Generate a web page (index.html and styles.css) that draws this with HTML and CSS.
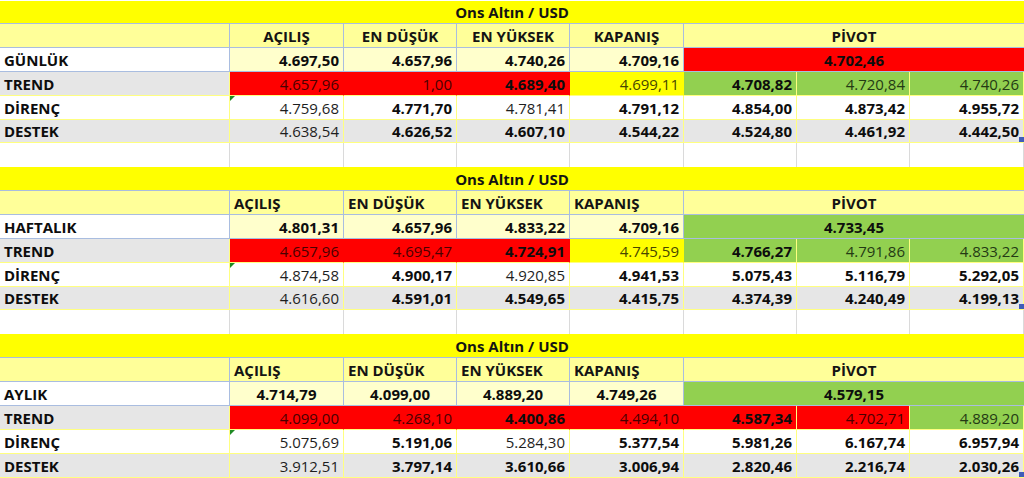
FILE: index.html
```html
<!DOCTYPE html>
<html lang="tr">
<head>
<meta charset="utf-8">
<title>Ons Altın / USD</title>
<link rel="stylesheet" href="styles.css">
</head>
<body>
<main class="sheet">

  <section class="block block--first">
    <div class="c title">Ons Altın / USD</div>

    <div class="c hd"></div>
    <div class="c hd hd--center">AÇILIŞ</div>
    <div class="c hd hd--center">EN DÜŞÜK</div>
    <div class="c hd hd--center">EN YÜKSEK</div>
    <div class="c hd hd--center">KAPANIŞ</div>
    <div class="c hd hd--center hd--pivot">PİVOT</div>

    <div class="c lbl lbl--main">GÜNLÜK</div>
    <div class="c main b">4.697,50</div>
    <div class="c main b">4.657,96</div>
    <div class="c main b">4.740,26</div>
    <div class="c main b">4.709,16</div>
    <div class="c main pivot pivot--red b">4.702,46</div>

    <div class="c lbl gray">TREND</div>
    <div class="c v tr red n">4.657,96</div>
    <div class="c v tr red n">1,00</div>
    <div class="c v tr red b">4.689,40</div>
    <div class="c v tr yel n">4.699,11</div>
    <div class="c v grn b">4.708,82</div>
    <div class="c v grn n">4.720,84</div>
    <div class="c v grn n">4.740,26</div>

    <div class="c lbl">DİRENÇ</div>
    <div class="c v n flag">4.759,68</div>
    <div class="c v b">4.771,70</div>
    <div class="c v n">4.781,41</div>
    <div class="c v b">4.791,12</div>
    <div class="c v b">4.854,00</div>
    <div class="c v b">4.873,42</div>
    <div class="c v b">4.955,72</div>

    <div class="c lbl gray">DESTEK</div>
    <div class="c v gray n">4.638,54</div>
    <div class="c v gray b">4.626,52</div>
    <div class="c v gray b">4.607,10</div>
    <div class="c v gray b">4.544,22</div>
    <div class="c v gray b">4.524,80</div>
    <div class="c v gray b">4.461,92</div>
    <div class="c v gray b handle">4.442,50</div>

    <div class="c empty"></div><div class="c empty"></div><div class="c empty"></div><div class="c empty"></div>
    <div class="c empty"></div><div class="c empty"></div><div class="c empty"></div><div class="c empty"></div>
  </section>

  <section class="block">
    <div class="c title">Ons Altın / USD</div>

    <div class="c hd"></div>
    <div class="c hd">AÇILIŞ</div>
    <div class="c hd">EN DÜŞÜK</div>
    <div class="c hd">EN YÜKSEK</div>
    <div class="c hd">KAPANIŞ</div>
    <div class="c hd hd--center hd--pivot">PİVOT</div>

    <div class="c lbl lbl--main">HAFTALIK</div>
    <div class="c main b">4.801,31</div>
    <div class="c main b">4.657,96</div>
    <div class="c main b">4.833,22</div>
    <div class="c main b">4.709,16</div>
    <div class="c main pivot pivot--green b">4.733,45</div>

    <div class="c lbl gray">TREND</div>
    <div class="c v tr red n">4.657,96</div>
    <div class="c v tr red n">4.695,47</div>
    <div class="c v tr red b">4.724,91</div>
    <div class="c v tr yel n">4.745,59</div>
    <div class="c v grn b">4.766,27</div>
    <div class="c v grn n">4.791,86</div>
    <div class="c v grn n">4.833,22</div>

    <div class="c lbl">DİRENÇ</div>
    <div class="c v n flag">4.874,58</div>
    <div class="c v b">4.900,17</div>
    <div class="c v n">4.920,85</div>
    <div class="c v b">4.941,53</div>
    <div class="c v b">5.075,43</div>
    <div class="c v b">5.116,79</div>
    <div class="c v b">5.292,05</div>

    <div class="c lbl gray">DESTEK</div>
    <div class="c v gray n">4.616,60</div>
    <div class="c v gray b">4.591,01</div>
    <div class="c v gray b">4.549,65</div>
    <div class="c v gray b">4.415,75</div>
    <div class="c v gray b">4.374,39</div>
    <div class="c v gray b">4.240,49</div>
    <div class="c v gray b handle">4.199,13</div>

    <div class="c empty"></div><div class="c empty"></div><div class="c empty"></div><div class="c empty"></div>
    <div class="c empty"></div><div class="c empty"></div><div class="c empty"></div><div class="c empty"></div>
  </section>

  <section class="block block--last">
    <div class="c title">Ons Altın / USD</div>

    <div class="c hd"></div>
    <div class="c hd">AÇILIŞ</div>
    <div class="c hd">EN DÜŞÜK</div>
    <div class="c hd">EN YÜKSEK</div>
    <div class="c hd">KAPANIŞ</div>
    <div class="c hd hd--center hd--pivot">PİVOT</div>

    <div class="c lbl lbl--main">AYLIK</div>
    <div class="c main main--center b">4.714,79</div>
    <div class="c main main--center b">4.099,00</div>
    <div class="c main main--center b">4.889,20</div>
    <div class="c main main--center b">4.749,26</div>
    <div class="c main pivot pivot--green b">4.579,15</div>

    <div class="c lbl gray">TREND</div>
    <div class="c v tr red n">4.099,00</div>
    <div class="c v tr red n">4.268,10</div>
    <div class="c v tr red b">4.400,86</div>
    <div class="c v tr red n">4.494,10</div>
    <div class="c v red b">4.587,34</div>
    <div class="c v red n">4.702,71</div>
    <div class="c v grn n">4.889,20</div>

    <div class="c lbl">DİRENÇ</div>
    <div class="c v n flag">5.075,69</div>
    <div class="c v b">5.191,06</div>
    <div class="c v n">5.284,30</div>
    <div class="c v b">5.377,54</div>
    <div class="c v b">5.981,26</div>
    <div class="c v b">6.167,74</div>
    <div class="c v b">6.957,94</div>

    <div class="c lbl gray">DESTEK</div>
    <div class="c v gray n">3.912,51</div>
    <div class="c v gray b">3.797,14</div>
    <div class="c v gray b">3.610,66</div>
    <div class="c v gray b">3.006,94</div>
    <div class="c v gray b">2.820,46</div>
    <div class="c v gray b">2.216,74</div>
    <div class="c v gray b handle">2.030,26</div>
  </section>

</main>
</body>
</html>
```

FILE: styles.css
```css
* { box-sizing: border-box; }

html, body {
  margin: 0;
  padding: 0;
  background: #ffffff;
}

body {
  padding-top: 1px;
  font-family: "Open Sans", "Liberation Sans", sans-serif;
  font-size: 15px;
  color: #111111;
  overflow: hidden;
}

.sheet {
  width: 1024px;
  display: flex;
  flex-direction: column;
}

.block {
  display: grid;
  grid-template-columns: 230px 114px 113px 113px 114px 113px 113px 114px;
  grid-template-rows: 24px 24px 24px 24px 24px 23px 24px;
}

.block--first {
  grid-template-rows: 23px 24px 24px 24px 24px 23px 24px;
}

.block--last {
  grid-template-rows: 24px 24px 24px 24px 24px 24px;
}

.c {
  display: flex;
  align-items: center;
  padding: 1px 4px 0 4px;
  white-space: nowrap;
  line-height: 1;
  position: relative;
  border-right: 1px solid #ffff80;
  border-bottom: 1px solid #ffff80;
  background: #ffffff;
}

.title {
  grid-column: 1 / -1;
  justify-content: center;
  background: #ffff00;
  font-weight: 700;
  border-right: 0;
  border-bottom: 1px solid #a9bde0;
  color: #141414;
}

.hd {
  background: #ffff99;
  font-weight: 700;
  border-right: 1px solid #a9bde0;
  border-bottom: 1px solid #a9bde0;
  justify-content: flex-start;
  color: #141414;
}

.hd--center { justify-content: center; }

.hd--pivot {
  grid-column: span 3;
  border-right: 0;
}

.lbl {
  font-weight: 700;
  color: #0d0d0d;
}

.lbl--main {
  border-right: 1px solid #a9bde0;
  border-bottom: 1px solid #a9bde0;
}

.main {
  background: #ffffcc;
  justify-content: flex-end;
  border-right: 1px solid #a9bde0;
  border-bottom: 1px solid #a9bde0;
}

.main--center { justify-content: center; }

.pivot {
  grid-column: span 3;
  justify-content: center;
  border-right: 0;
}

.pivot--red { background: #ff0000; color: #1a0000; }
.pivot--green { background: #92d050; }

.v {
  justify-content: flex-end;
  color: #1e1e1e;
}

.b { font-weight: 700; color: #0d0d0d; }
.n { font-weight: 400; }

.gray { background: #e6e6e6; }

.red { background: #ff0000; }
.red.n { color: #4a0000; }
.yel { background: #ffff00; }
.yel.n { color: #474700; }
.grn { background: #92d050; }
.grn.n { color: #243a14; }

.tr { border-right-color: transparent; }

.empty {
  border-right: 1px solid #dadada;
  border-bottom: 0;
}

.flag::before {
  content: "";
  position: absolute;
  left: 0;
  top: 0;
  border-top: 5px solid #1f8a24;
  border-right: 5px solid transparent;
}

.handle::after {
  content: "";
  position: absolute;
  right: -1px;
  bottom: 0;
  width: 5px;
  height: 5px;
  background: #3f5db8;
}
```
